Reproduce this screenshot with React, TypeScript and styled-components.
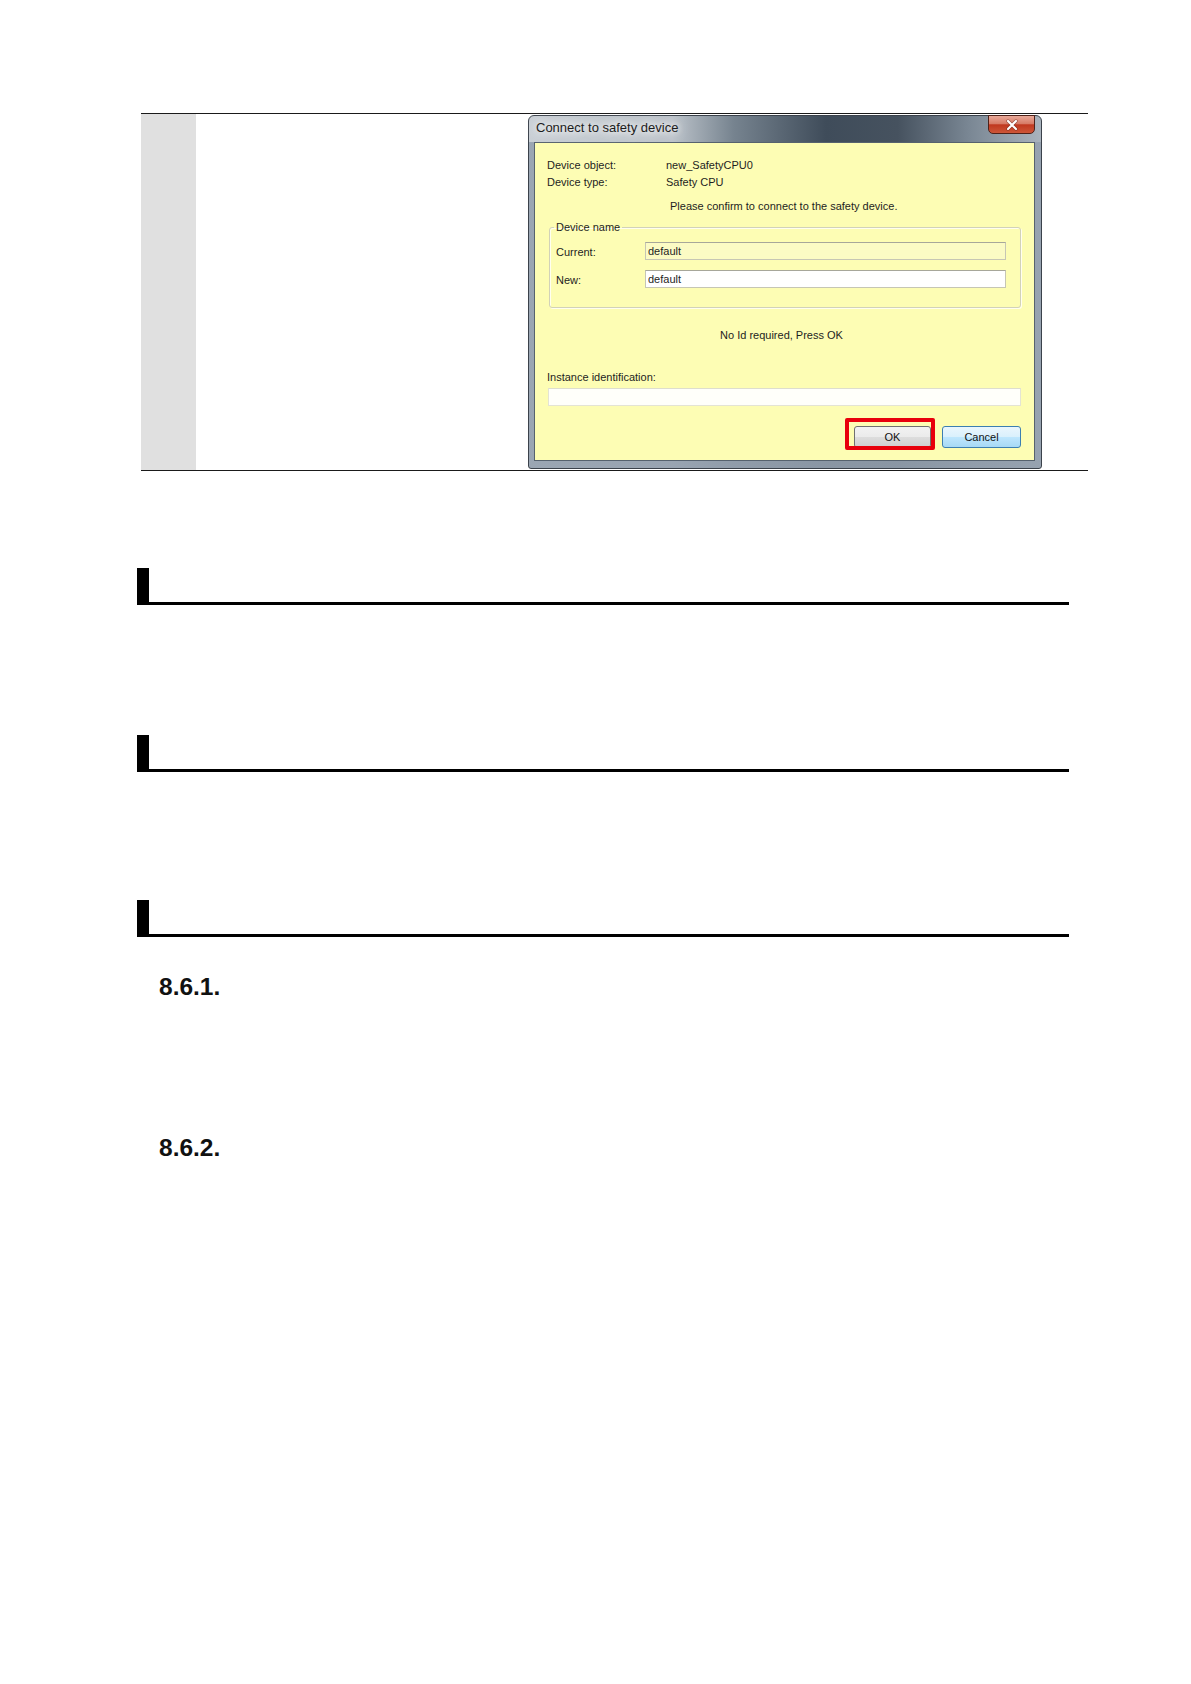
import React from "react";
import styled, { createGlobalStyle } from "styled-components";

const GlobalStyle = createGlobalStyle`
  html, body {
    margin: 0;
    padding: 0;
    background: #ffffff;
  }
  body {
    font-family: "Liberation Sans", Arial, sans-serif;
    color: #000;
  }
`;

const Page = styled.div`
  min-height: 1684px;
  box-sizing: border-box;
  padding-top: 113px;
`;

const StepRow = styled.div`
  display: grid;
  grid-template-columns: 55px 332px 514px 1fr;
  width: 947px;
  margin-left: 141px;
  border-top: 1px solid #1a1a1a;
  border-bottom: 1px solid #1a1a1a;
`;

const StepNumber = styled.div`
  background: #e0e0e0;
`;

const StepText = styled.div``;

const ShotCell = styled.div`
  padding: 1px 0;
`;

/* ---- Windows 7 style dialog ---- */

const Dialog = styled.div`
  width: 514px;
  box-sizing: border-box;
  border: 1px solid #3b424b;
  border-radius: 6px 6px 3px 3px;
  padding: 0 6px 7px 5px;
  background:
    linear-gradient(
      to bottom,
      transparent 0,
      transparent 26px,
      rgba(148, 160, 174, 0.88) 26px
    ),
    linear-gradient(
      90deg,
      #c9cfd5 0%,
      #bcc3ca 28%,
      #76838f 40%,
      #3f4c5a 58%,
      #46525f 72%,
      #7a8794 86%,
      #a9b3bd 100%
    );
`;

const TitleBar = styled.div`
  height: 26px;
  display: flex;
  justify-content: space-between;
  align-items: flex-start;
`;

const TitleText = styled.span`
  padding: 2px 0 0 2px;
  line-height: 20px;
  font-size: 13px;
  color: #1c1c1c;
  text-shadow: 0 0 6px #ffffff, 0 0 12px #ffffff, 0 0 18px #e8ecf0;
`;

const CloseButton = styled.div`
  width: 47px;
  height: 19px;
  margin-top: -1px;
  box-sizing: border-box;
  border: 1px solid #4f2219;
  border-radius: 0 0 5px 5px;
  background: linear-gradient(
    to bottom,
    #e9a999 0%,
    #d77b66 45%,
    #c0381f 52%,
    #cd5638 100%
  );
  display: flex;
  align-items: center;
  justify-content: center;
`;

const Client = styled.div`
  background: #fdfdb4;
  border: 1px solid #56626e;
  padding: 14px 13px 12px 12px;
  font-size: 11px;
  color: #1e1e1e;
`;

const InfoRow = styled.div`
  display: grid;
  grid-template-columns: 119px 1fr;
  line-height: 17px;
`;

const Note = styled.div<{ $indent?: number; $top: number; $center?: boolean }>`
  line-height: 17px;
  margin-top: ${(p) => p.$top}px;
  padding-left: ${(p) => p.$indent ?? 0}px;
  text-align: ${(p) => (p.$center ? "center" : "left")};
  padding-right: ${(p) => (p.$center ? 5 : 0)}px;
`;

const GroupBox = styled.fieldset`
  margin: 5px 0 0 2px;
  padding: 8px 14px 19px 6px;
  border: 1px solid #d2d2b8;
  border-radius: 3px;
  box-shadow: inset 1px 1px 0 rgba(255, 255, 255, 0.8),
    1px 1px 0 rgba(255, 255, 255, 0.8);
  display: flex;
  flex-direction: column;
  gap: 10px;
  min-width: 0;
`;

const GroupLegend = styled.legend`
  padding: 0 2px;
  margin-left: -2px;
  line-height: 14px;
  font-size: 11px;
`;

const FieldRow = styled.div`
  display: grid;
  grid-template-columns: 89px 1fr;
  align-items: center;
`;

const FieldLabel = styled.span`
  line-height: 14px;
  padding-top: 2px;
`;

const TextBox = styled.input<{ $tone: "yellow" | "white" | "faint" }>`
  height: 18px;
  width: 100%;
  box-sizing: border-box;
  margin: 0;
  padding: 0 2px;
  font-family: "Liberation Sans", Arial, sans-serif;
  font-size: 11px;
  color: #1e1e1e;
  outline: none;
  border: 1px solid
    ${(p) => (p.$tone === "faint" ? "#e4e4d4" : "#c6c6b4")};
  border-top-color: ${(p) => (p.$tone === "faint" ? "#dedece" : "#a7a79a")};
  background: ${(p) =>
    p.$tone === "yellow" ? "#fbfbc4" : p.$tone === "white" ? "#ffffff" : "#fffffa"};
`;

const InstanceBox = styled(TextBox)`
  display: block;
  margin: 2px 0 0 1px;
  width: calc(100% - 1px);
`;

const ButtonRow = styled.div`
  display: flex;
  justify-content: flex-end;
  gap: 11px;
  margin-top: 20px;
`;

const Highlight = styled.div`
  position: relative;
  &::after {
    content: "";
    position: absolute;
    top: -8px;
    right: -4px;
    bottom: -2px;
    left: -9px;
    border: 4px solid #e8000b;
    border-radius: 2px;
  }
`;

const DialogButton = styled.button<{ $variant: "plain" | "focused"; $w: number }>`
  width: ${(p) => p.$w}px;
  height: 22px;
  box-sizing: border-box;
  padding: 0;
  font-family: "Liberation Sans", Arial, sans-serif;
  font-size: 11px;
  color: #111;
  border-radius: 3px;
  border: 1px solid ${(p) => (p.$variant === "plain" ? "#707070" : "#3c7fb1")};
  background: ${(p) =>
    p.$variant === "plain"
      ? "linear-gradient(to bottom, #f2f2f2 0%, #ebebeb 50%, #dddddd 51%, #cfcfcf 100%)"
      : "linear-gradient(to bottom, #eaf6fd 0%, #d9f0fc 50%, #bee6fd 51%, #a7d9f5 100%)"};
`;

/* ---- document headings ---- */

const SectionHeading = styled.div<{ $top: number }>`
  width: 932px;
  height: 37px;
  box-sizing: border-box;
  margin: ${(p) => p.$top}px 0 0 137px;
  border-left: 12px solid #000;
  border-bottom: 3px solid #000;
`;

const SubHeading = styled.div<{ $top: number }>`
  margin: ${(p) => p.$top}px 0 0 159px;
  font-size: 24.5px;
  line-height: 28px;
  font-weight: bold;
  color: #111;
`;

const ConnectDialog = () => (
  <Dialog>
    <TitleBar>
      <TitleText>Connect to safety device</TitleText>
      <CloseButton>
        <svg width="14" height="12" viewBox="0 0 14 12">
          <path
            d="M3 2 L11 10 M11 2 L3 10"
            stroke="#5a1a10"
            strokeWidth="3.4"
            strokeLinecap="round"
            opacity="0.5"
          />
          <path
            d="M3 2 L11 10 M11 2 L3 10"
            stroke="#ffffff"
            strokeWidth="2.2"
            strokeLinecap="round"
          />
        </svg>
      </CloseButton>
    </TitleBar>
    <Client>
      <InfoRow>
        <span>Device object:</span>
        <span>new_SafetyCPU0</span>
      </InfoRow>
      <InfoRow>
        <span>Device type:</span>
        <span>Safety CPU</span>
      </InfoRow>
      <Note $top={7} $indent={123}>
        Please confirm to connect to the safety device.
      </Note>
      <GroupBox>
        <GroupLegend>Device name</GroupLegend>
        <FieldRow>
          <FieldLabel>Current:</FieldLabel>
          <TextBox $tone="yellow" readOnly value="default" />
        </FieldRow>
        <FieldRow>
          <FieldLabel>New:</FieldLabel>
          <TextBox $tone="white" readOnly value="default" />
        </FieldRow>
      </GroupBox>
      <Note $top={19} $center>
        No Id required, Press OK
      </Note>
      <Note $top={25}>Instance identification:</Note>
      <InstanceBox $tone="faint" readOnly value="" />
      <ButtonRow>
        <Highlight>
          <DialogButton $variant="plain" $w={77}>
            OK
          </DialogButton>
        </Highlight>
        <DialogButton $variant="focused" $w={79}>
          Cancel
        </DialogButton>
      </ButtonRow>
    </Client>
  </Dialog>
);

export default function App() {
  return (
    <>
      <GlobalStyle />
      <Page>
        <StepRow>
          <StepNumber />
          <StepText />
          <ShotCell>
            <ConnectDialog />
          </ShotCell>
          <div />
        </StepRow>

        <SectionHeading $top={97} />
        <SectionHeading $top={130} />
        <SectionHeading $top={128} />

        <SubHeading $top={36}>8.6.1.</SubHeading>
        <SubHeading $top={133}>8.6.2.</SubHeading>
      </Page>
    </>
  );
}
